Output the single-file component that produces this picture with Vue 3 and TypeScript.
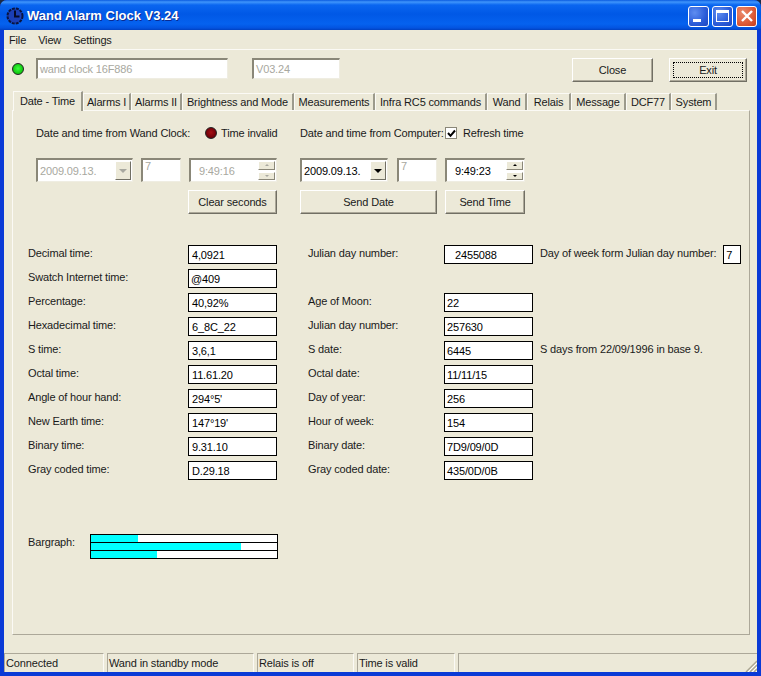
<template>
  <div class="window">
    <!-- title bar -->
    <div class="titlebar">
      <svg class="app-icon" width="18" height="18" viewBox="0 0 18 18">
        <circle cx="9" cy="9" r="7.5" fill="#1b3fb5" stroke="#0a1440" stroke-width="2" stroke-dasharray="3 1" />
        <path d="M9 3.5V9.5H13.5" fill="none" stroke="#050a28" stroke-width="2" />
      </svg>
      <span class="title-text">Wand Alarm Clock V3.24</span>
      <div class="caption-buttons">
        <div class="cap-btn">
          <span class="cap-min"></span>
        </div>
        <div class="cap-btn">
          <span class="cap-max"></span>
        </div>
        <div class="cap-btn cap-close">
          <svg width="14" height="14" viewBox="0 0 14 14">
            <path d="M2 2L12 12M12 2L2 12" stroke="#fff" stroke-width="2.4" />
          </svg>
        </div>
      </div>
    </div>

    <div class="body">
      <div class="menubar">
        <span class="menu-item">File</span>
        <span class="menu-item">View</span>
        <span class="menu-item">Settings</span>
      </div>

      <!-- device row -->
      <div class="device-row">
        <span class="led led-green"></span>
        <div class="field off name-field">wand clock 16F886</div>
        <div class="field off version-field">V03.24</div>
        <div class="btn close-btn">Close</div>
        <div class="btn exit-btn"><span class="focus">Exit</span></div>
      </div>

      <!-- tabs -->
      <div class="tabs">
        <div
          v-for="(tab, i) in tabs"
          :key="tab"
          class="tab"
          :class="{ active: i === 0 }"
        >
          {{ tab }}
        </div>
      </div>

      <div class="panel">
        <div class="sync">
          <div class="sync-col left-col">
            <div class="sync-head">
              <span class="head-label">Date and time from Wand Clock:</span>
              <span class="led led-red"></span>
              <span>Time invalid</span>
            </div>
            <div class="sync-controls">
              <div class="field off date-box">
                <span class="date-val">2009.09.13.</span>
                <span class="drop off-drop"><i></i></span>
              </div>
              <div class="field off day-box">7</div>
              <div class="field off time-box">
                <span class="time-val">9:49:16</span>
                <span class="spin off-spin"><b class="up"></b><b class="down"></b></span>
              </div>
            </div>
            <div class="sync-buttons end">
              <div class="btn clear-btn">Clear seconds</div>
            </div>
          </div>

          <div class="sync-col right-col">
            <div class="sync-head">
              <span class="head-label-r">Date and time from Computer:</span>
              <span class="check">
                <svg width="9" height="9" viewBox="0 0 9 9">
                  <path d="M1 4L3.5 6.8L8 1.5" fill="none" stroke="#000" stroke-width="2" />
                </svg>
              </span>
              <span>Refresh time</span>
            </div>
            <div class="sync-controls">
              <div class="field date-box-r">
                <span class="date-val dark">2009.09.13.</span>
                <span class="drop"><i></i></span>
              </div>
              <div class="field off day-box-r">7</div>
              <div class="field time-box-r">
                <span class="time-val dark">9:49:23</span>
                <span class="spin"><b class="up"></b><b class="down"></b></span>
              </div>
            </div>
            <div class="sync-buttons">
              <div class="btn send-date">Send Date</div>
              <div class="btn send-time">Send Time</div>
            </div>
          </div>
        </div>

        <!-- readouts -->
        <div class="readouts">
          <template v-for="row in rows" :key="row.label">
            <span class="lbl">{{ row.label }}</span>
            <span class="box" :class="row.cls">{{ row.value }}</span>
            <span></span>
            <template v-if="row.label2">
              <span class="lbl">{{ row.label2 }}</span>
              <span class="box" :class="row.cls2">{{ row.value2 }}</span>
            </template>
            <template v-else>
              <span></span>
              <span></span>
            </template>
            <span class="note">
              <template v-if="row.note">{{ row.note }}</template>
              <span v-if="row.extra" class="box mini">{{ row.extra }}</span>
            </span>
          </template>
        </div>

        <div class="bargraph">
          <span class="lbl bar-lbl">Bargraph:</span>
          <div class="bars">
            <div v-for="(b, i) in bars" :key="i" class="bar">
              <div class="bar-fill" :style="{ width: b + 'px' }"></div>
            </div>
          </div>
        </div>
      </div>

      <!-- status bar -->
      <div class="statusbar">
        <div class="st st1">Connected</div>
        <div class="st st2">Wand in standby mode</div>
        <div class="st st3">Relais is off</div>
        <div class="st st4">Time is valid</div>
        <div class="st st5"></div>
        <svg class="grip" width="12" height="12" viewBox="0 0 12 12">
          <path d="M12 1L1 12M12 5L5 12M12 9L9 12" stroke="#a9a591" stroke-width="1.4" />
          <path d="M12 3L3 12M12 7L7 12M12 11L11 12" stroke="#fff" stroke-width="1" />
        </svg>
      </div>
    </div>
  </div>
</template>

<script setup lang="ts">
interface Row {
  label: string;
  value: string;
  cls?: string;
  label2?: string;
  value2?: string;
  cls2?: string;
  note?: string;
  extra?: string;
}

const tabs = [
  "Date - Time",
  "Alarms I",
  "Alarms II",
  "Brightness and Mode",
  "Measurements",
  "Infra RC5 commands",
  "Wand",
  "Relais",
  "Message",
  "DCF77",
  "System",
];

const rows: Row[] = [
  { label: "Decimal time:", value: "4,0921", cls: "ind", label2: "Julian day number:", value2: "2455088", cls2: "ind-big", note: "Day of week form Julian day number:", extra: "7" },
  { label: "Swatch Internet time:", value: "@409" },
  { label: "Percentage:", value: "40,92%", cls: "ind", label2: "Age of Moon:", value2: "22" },
  { label: "Hexadecimal time:", value: "6_8C_22", cls: "ind", label2: "Julian day number:", value2: "257630" },
  { label: "S time:", value: "3,6,1", cls: "ind", label2: "S date:", value2: "6445", note: "S days from 22/09/1996 in base 9." },
  { label: "Octal time:", value: "11.61.20", cls: "ind", label2: "Octal date:", value2: "11/11/15" },
  { label: "Angle of hour hand:", value: "294°5'", cls: "ind", label2: "Day of year:", value2: "256" },
  { label: "New Earth time:", value: "147°19'", cls: "ind", label2: "Hour of week:", value2: "154" },
  { label: "Binary time:", value: "9.31.10", cls: "ind", label2: "Binary date:", value2: "7D9/09/0D" },
  { label: "Gray coded time:", value: "D.29.18", cls: "ind", label2: "Gray coded date:", value2: "435/0D/0B" },
];

// filled pixels of each bargraph row
const bars = [47, 150, 66];
</script>

<style>
html,
body {
  margin: 0;
  background: #1c2b45;
}
</style>

<style scoped>
.window {
  width: 761px;
  height: 676px;
  display: flex;
  flex-direction: column;
  font-family: "Liberation Sans", Arial, sans-serif;
  font-size: 11px;
  letter-spacing: -0.15px;
  color: #1a1a1a;
  box-sizing: border-box;
  border-radius: 7px 7px 0 0;
  overflow: hidden;
  background: #0a3ad6;
}

.titlebar {
  height: 30px;
  flex: none;
  display: flex;
  align-items: center;
  padding: 0 4px 0 6px;
  box-sizing: border-box;
  background: linear-gradient(
    180deg,
    #0a5be0 0,
    #3f95fb 2px,
    #0a66f0 5px,
    #0058e6 14px,
    #0562ef 24px,
    #0353e0 28px,
    #0040c0 30px
  );
}

.app-icon {
  flex: none;
  margin-top: 1px;
}

.title-text {
  margin-left: 3px;
  font-family: "Liberation Sans", Arial, sans-serif;
  font-weight: 700;
  font-size: 13px;
  letter-spacing: 0;
  color: #fff;
  text-shadow: 1px 1px 0 #0a2a90;
}

.caption-buttons {
  margin-left: auto;
  display: flex;
  gap: 3px;
  margin-top: 2px;
}

.cap-btn {
  width: 21px;
  height: 21px;
  box-sizing: border-box;
  border: 1px solid #fff;
  border-radius: 3px;
  background: radial-gradient(circle at 30% 30%, #5f8df0, #2a5bd8 60%, #1d46c0);
  display: flex;
  align-items: center;
  justify-content: center;
  position: relative;
}

.cap-close {
  background: radial-gradient(circle at 30% 30%, #ea8a6c, #dc5a36 60%, #c23c1c);
}

.cap-min {
  width: 8px;
  height: 3px;
  background: #fff;
  margin-top: 8px;
  margin-right: 4px;
}

.cap-max {
  width: 13px;
  height: 12px;
  box-sizing: border-box;
  border: 1px solid #fff;
  border-top-width: 3px;
}

.body {
  flex: 1;
  margin: 0 4px 4px;
  background: #ece9d8;
  display: flex;
  flex-direction: column;
  min-height: 0;
}

.menubar {
  height: 19px;
  flex: none;
  display: flex;
  gap: 12px;
  align-items: center;
  padding-left: 5px;
  border-bottom: 1px solid #fbfaf5;
  box-sizing: content-box;
}

.device-row {
  display: flex;
  height: 24px;
  padding-top: 8px;
  flex: none;
  align-items: flex-start;
}

.led {
  display: inline-block;
  width: 12px;
  height: 12px;
  border-radius: 50%;
  flex: none;
  box-sizing: border-box;
  border: 1px solid #222;
}

.led-green {
  margin: 5px 0 0 8px;
  background: radial-gradient(circle at 50% 45%, #3cff3c, #0fc40f 70%);
}

.led-red {
  background: radial-gradient(circle at 50% 45%, #a50f14, #6d0008 70%);
  margin: 0 4px 0 15px;
}

.field {
  box-sizing: border-box;
  background: #fff;
  border: 1px solid #efede2;
  border-top-color: #8a8778;
  border-left-color: #8a8778;
  border-width: 2px 1px 1px 2px;
  height: 21px;
  display: flex;
  align-items: center;
  position: relative;
  color: #000;
}

.field.off {
  color: #a8a8a0;
  padding-left: 2px;
}

.name-field {
  width: 192px;
  height: 21px;
  margin-left: 12px;
}

.version-field {
  width: 88px;
  margin-left: 24px;
}

.btn {
  box-sizing: border-box;
  background: #ece9d8;
  border: 1px solid;
  border-color: #fff #716f64 #716f64 #fff;
  box-shadow: inset -1px -1px 0 #aca899;
  display: flex;
  align-items: center;
  justify-content: center;
  height: 24px;
  flex: none;
}

.close-btn {
  width: 81px;
  margin-left: 232px;
}

.exit-btn {
  width: 78px;
  margin-left: 16px;
  padding: 3px;
}

.focus {
  flex: 1;
  align-self: stretch;
  display: flex;
  align-items: center;
  justify-content: center;
  border: 1px dotted #000;
}

.tabs {
  display: grid;
  grid-template-columns: 70px 48px 51px 112px 81px 112px 40px 44px 55px 45px 46px;
  flex: none;
  height: 22px;
  margin-top: 6px;
  padding-left: 9px;
  align-items: end;
  position: relative;
  z-index: 1;
}

.tab {
  height: 17px;
  box-sizing: border-box;
  border-right: 2px solid #9c9a8c;
  border-left: 1px solid #fbfaf5;
  border-top: 1px solid #fbfaf5;
  display: flex;
  align-items: center;
  justify-content: center;
  white-space: nowrap;
}

.tab.active {
  height: 20px;
  padding-bottom: 2px;
  margin-bottom: -1px;
  background: #ece9d8;
}

.panel {
  width: 738px;
  height: 525px;
  flex: none;
  box-sizing: border-box;
  margin-left: 8px;
  border: 1px solid;
  border-color: #fbfaf5 #aca899 #aca899 #fbfaf5;
  padding: 14px 0 0 15px;
}

.sync {
  display: flex;
  margin-left: 8px;
  gap: 23px;
}

.sync-col {
  width: 241px;
  flex: none;
}

.right-col {
  width: 226px;
}

.sync-head {
  display: flex;
  align-items: center;
  height: 16px;
  white-space: nowrap;
}

.head-label-r {
  width: 145px;
  flex: none;
}

.check {
  width: 12px;
  height: 12px;
  box-sizing: border-box;
  border: 1px solid #8a8778;
  background: #fff;
  display: flex;
  align-items: center;
  justify-content: center;
  margin-right: 6px;
  flex: none;
}

.sync-controls {
  display: flex;
  margin-top: 17px;
  height: 24px;
}

.sync-controls .field {
  height: 24px;
  flex: none;
}

.date-box {
  width: 97px;
}

.day-box {
  width: 40px;
  margin-left: 8px;
  align-items: flex-start !important;
}

.time-box {
  width: 88px;
  margin-left: 8px;
}

.date-box-r {
  width: 88px;
}

.day-box-r {
  width: 40px;
  margin-left: 9px;
  align-items: flex-start !important;
}

.time-box-r {
  width: 80px;
  margin-left: 8px;
}

.dark {
  color: #000;
  padding-left: 2px;
}

.time-val {
  margin-left: 6px;
}

.drop {
  position: absolute;
  right: 1px;
  top: 1px;
  bottom: 1px;
  width: 16px;
  background: #ece9d8;
  border: 1px solid;
  border-color: #fff #716f64 #716f64 #fff;
  box-sizing: border-box;
  display: flex;
  align-items: center;
  justify-content: center;
}

.drop i {
  width: 0;
  height: 0;
  border: 4px solid transparent;
  border-top: 4px solid #000;
  border-bottom: 0;
}

.off-drop i {
  border-top-color: #a8a8a0;
}

.spin {
  position: absolute;
  right: 1px;
  top: 1px;
  bottom: 1px;
  width: 17px;
  display: flex;
  flex-direction: column;
  gap: 2px;
}

.spin b {
  flex: 1;
  background: #ece9d8;
  border: 1px solid;
  border-color: #fff #8a8778 #8a8778 #fff;
  display: flex;
  align-items: center;
  justify-content: center;
}

.spin b::after {
  content: "";
  border: 2px solid transparent;
}

.spin .up::after {
  border-bottom-color: #000;
  border-top: 0;
}

.spin .down::after {
  border-top-color: #000;
  border-bottom: 0;
}

.off-spin .up::after {
  border-bottom-color: #a8a8a0;
}

.off-spin .down::after {
  border-top-color: #a8a8a0;
}

.sync-buttons {
  display: flex;
  margin-top: 8px;
  gap: 8px;
}

.sync-buttons.end {
  justify-content: flex-end;
}

.clear-btn {
  width: 89px;
}

.send-date {
  width: 137px;
}

.send-time {
  width: 80px;
}

.readouts {
  display: grid;
  grid-template-columns: 160px 89px 31px 136px 89px auto;
  grid-auto-rows: 24px;
  margin-top: 31px;
  align-items: start;
  white-space: nowrap;
}

.lbl {
  line-height: 16px;
}

.box {
  box-sizing: border-box;
  display: block;
  height: 19px;
  border: 1px solid #000;
  background: #fff;
  color: #000;
  line-height: 18px;
  padding-left: 2px;
}

.ind {
  padding-left: 3px;
}

.ind-big {
  padding-left: 10px;
}

.note {
  display: flex;
  padding-left: 7px;
  line-height: 16px;
}

.box.mini {
  width: 18px;
  margin-left: 7px;
}

.bargraph {
  display: flex;
  margin-top: 49px;
}

.bar-lbl {
  width: 62px;
  flex: none;
}

.bars {
  width: 188px;
  box-sizing: border-box;
  border: 1px solid #000;
  border-bottom: 0;
}

.bar {
  height: 7px;
  background: #fff;
  border-bottom: 1px solid #000;
  box-sizing: content-box;
  display: flex;
}

.bar-fill {
  background: #00ffff;
}

.statusbar {
  margin-top: auto;
  height: 19px;
  flex: none;
  display: flex;
  position: relative;
  gap: 3px;
}

.st {
  box-sizing: border-box;
  border-top: 1px solid #aca899;
  border-left: 1px solid #aca899;
  border-right: 1px solid #fbfaf5;
  padding-left: 1px;
  display: flex;
  align-items: center;
  white-space: nowrap;
}

.st1 {
  width: 100px;
}

.st2 {
  width: 147px;
}

.st3 {
  width: 97px;
}

.st4 {
  width: 98px;
}

.st5 {
  flex: 1;
  border-right: 0;
}

.grip {
  position: absolute;
  right: 0;
  bottom: 0;
}
</style>
